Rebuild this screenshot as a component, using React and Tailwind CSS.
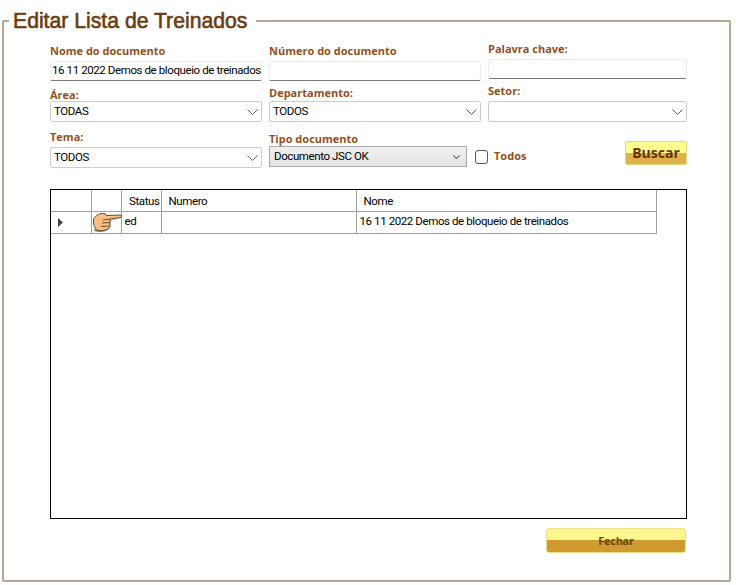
const labelClass = "block font-['Open_Sans',sans-serif] text-[11px] font-bold leading-[14px] text-[#94501a]";
const fieldFont = "font-['Roboto',sans-serif] text-[11.5px] tracking-[-0.4px]";

function Chevron({ className = "", strokeWidth = 1 }) {
  return (
    <svg width="11" height="6" viewBox="0 0 11 6" fill="none" stroke="#606060" strokeWidth={strokeWidth} className={className}>
      <path d="M0.5 0.5 L5.5 5.5 L10.5 0.5" />
    </svg>
  );
}

function TextInput({ value = "", className = "" }) {
  return (
    <div className={`flex h-[20px] items-center overflow-hidden whitespace-nowrap rounded-[2px] border border-[#ececec] border-b-[#7a7a7a] bg-white pl-[1px] text-black ${fieldFont} ${className}`}>
      {value}
    </div>
  );
}

function Combo({ value = "", className = "" }) {
  return (
    <div className={`flex h-[21px] items-center justify-between rounded-[2px] border border-[#cccccc] bg-white pl-[3px] pr-[3px] text-black ${fieldFont} ${className}`}>
      <span>{value}</span>
      <Chevron />
    </div>
  );
}

function Hand() {
  return (
    <svg width="30" height="21" viewBox="0 0 30 21" className="block">
      <path d="M2 19 C8 21 14 20 17 17 L18 9 L29 6 L14 9 L3 16 Z" fill="#8a8470" />
      <path d="M1.5 7 C4 3 8 1 12 1.5 L15 3.5 L29 3 C30 4 30 5 29 5.5 L18 7 L18 15 C16 18 11 19 6 18.5 C3.5 18 2 14 1.5 11 Z" fill="#f8bf85" stroke="#5e4a2c" strokeWidth="1" />
      <path d="M11 8 L18 7 M10 11 L18 10.5 M9 14.5 L17 14" stroke="#6e4c22" strokeWidth="1" fill="none" />
    </svg>
  );
}

export default function App() {
  return (
    <div className="h-[585px] w-[736px] overflow-hidden bg-white px-[2px] pt-[7px]">
      <fieldset className="h-[575px] w-[729px] rounded-[2px] border-2 border-[#b8a794] pl-[46px] pr-[41px]">
        <legend className="-ml-[41px] pl-[4px] pr-[9px] font-['Liberation_Sans',sans-serif] text-[21.2px] font-normal leading-[28px] text-[#6b3d10] [-webkit-text-stroke:0.6px_#6b3d10]">
          Editar Lista de Treinados
        </legend>

        <div className="flex gap-[7px]">
          <div className="w-[212px]">
            <label className={`${labelClass} mt-[9px]`}>Nome do documento</label>
            <TextInput className="mt-[3px]" value="16 11 2022 Demos de bloqueio de treinados" />
            <label className={`${labelClass} mt-[7px]`}>Área:</label>
            <Combo className="-mt-[1px]" value="TODAS" />
            <label className={`${labelClass} mt-[8px]`}>Tema:</label>
            <Combo className="mt-[3px]" value="TODOS" />
          </div>

          <div className="w-[212px]">
            <label className={`${labelClass} mt-[9px]`}>Número do documento</label>
            <TextInput className="mt-[3px]" />
            <label className={`${labelClass} mt-[5px]`}>Departamento:</label>
            <Combo className="mt-[1px]" value="TODOS" />
            <label className={`${labelClass} mt-[10px]`}>Tipo documento</label>
            <div className="flex items-center">
              <div className={`flex h-[21px] w-[198px] shrink-0 items-center justify-between border border-[#a9a9a9] bg-[linear-gradient(#f0f0f0,#e3e3e3)] pl-[4px] pr-[6px] text-black ${fieldFont}`}>
                <span>Documento JSC OK</span>
                <Chevron className="h-[4px] w-[7px]" strokeWidth={1.6} />
              </div>
              <span className="ml-[8px] h-[14px] w-[13px] shrink-0 rounded-[3px] border border-[#555555] bg-white" />
              <span className="ml-[6px] font-['Open_Sans',sans-serif] text-[11px] font-bold text-[#94501a]">Todos</span>
            </div>
          </div>

          <div className="w-[199px]">
            <label className={`${labelClass} mt-[7px]`}>Palavra chave:</label>
            <TextInput className="mt-[3px]" />
            <label className={`${labelClass} mt-[5px]`}>Setor:</label>
            <Combo className="mt-[3px]" />
            <div className="mt-[19px] flex justify-end">
              <button className="h-[24px] w-[62px] rounded-[2px] border border-[#e6d777] bg-[linear-gradient(#ffff90_50%,#e0b04a_50%)] font-['Open_Sans',sans-serif] text-[14px] font-bold leading-[20px] text-[#6b3205]">
                Buscar
              </button>
            </div>
          </div>
        </div>

        <div className="mt-[21px] h-[330px] w-[637px] border border-black bg-white font-['Roboto',sans-serif] text-[11.5px] tracking-[-0.4px] text-black">
          <table className="w-[606px] table-fixed border-collapse">
            <thead>
              <tr className="h-[21px] border-b border-[#a0a0a0]">
                <th className="w-[40px] border-r border-[#a0a0a0] font-normal" />
                <th className="w-[30px] border-r border-[#a0a0a0] font-normal" />
                <th className="w-[40px] border-r border-[#a0a0a0] pr-[1px] pt-[2px] text-right font-normal">Status</th>
                <th className="w-[195px] border-r border-[#a0a0a0] pl-[7px] pt-[2px] text-left font-normal">Numero</th>
                <th className="border-r border-[#a0a0a0] pl-[7px] pt-[2px] text-left font-normal">Nome</th>
              </tr>
            </thead>
            <tbody>
              <tr className="h-[22px] border-b border-[#a0a0a0]">
                <td className="border-r border-[#a0a0a0] pl-[7px]">
                  <svg width="5" height="9" viewBox="0 0 5 9" className="block"><path d="M0 0 L5 4.5 L0 9 Z" fill="#404040" /></svg>
                </td>
                <td className="border-r border-[#a0a0a0]"><Hand /></td>
                <td className="border-r border-[#a0a0a0] pl-[3px]">ed</td>
                <td className="border-r border-[#a0a0a0]" />
                <td className="border-r border-[#a0a0a0] pl-[3px]">16 11 2022 Demos de bloqueio de treinados</td>
              </tr>
            </tbody>
          </table>
        </div>

        <div className="mt-[9px] flex justify-end pr-[2px]">
          <button className="h-[25px] w-[140px] rounded-[3px] border border-[#ecdf8a] bg-[linear-gradient(#fdf68f_50%,#cf9a30_50%)] font-['Open_Sans',sans-serif] text-[11px] font-bold leading-[20px] tracking-[-0.3px] text-[#6b4510]">
            Fechar
          </button>
        </div>
      </fieldset>
    </div>
  );
}
